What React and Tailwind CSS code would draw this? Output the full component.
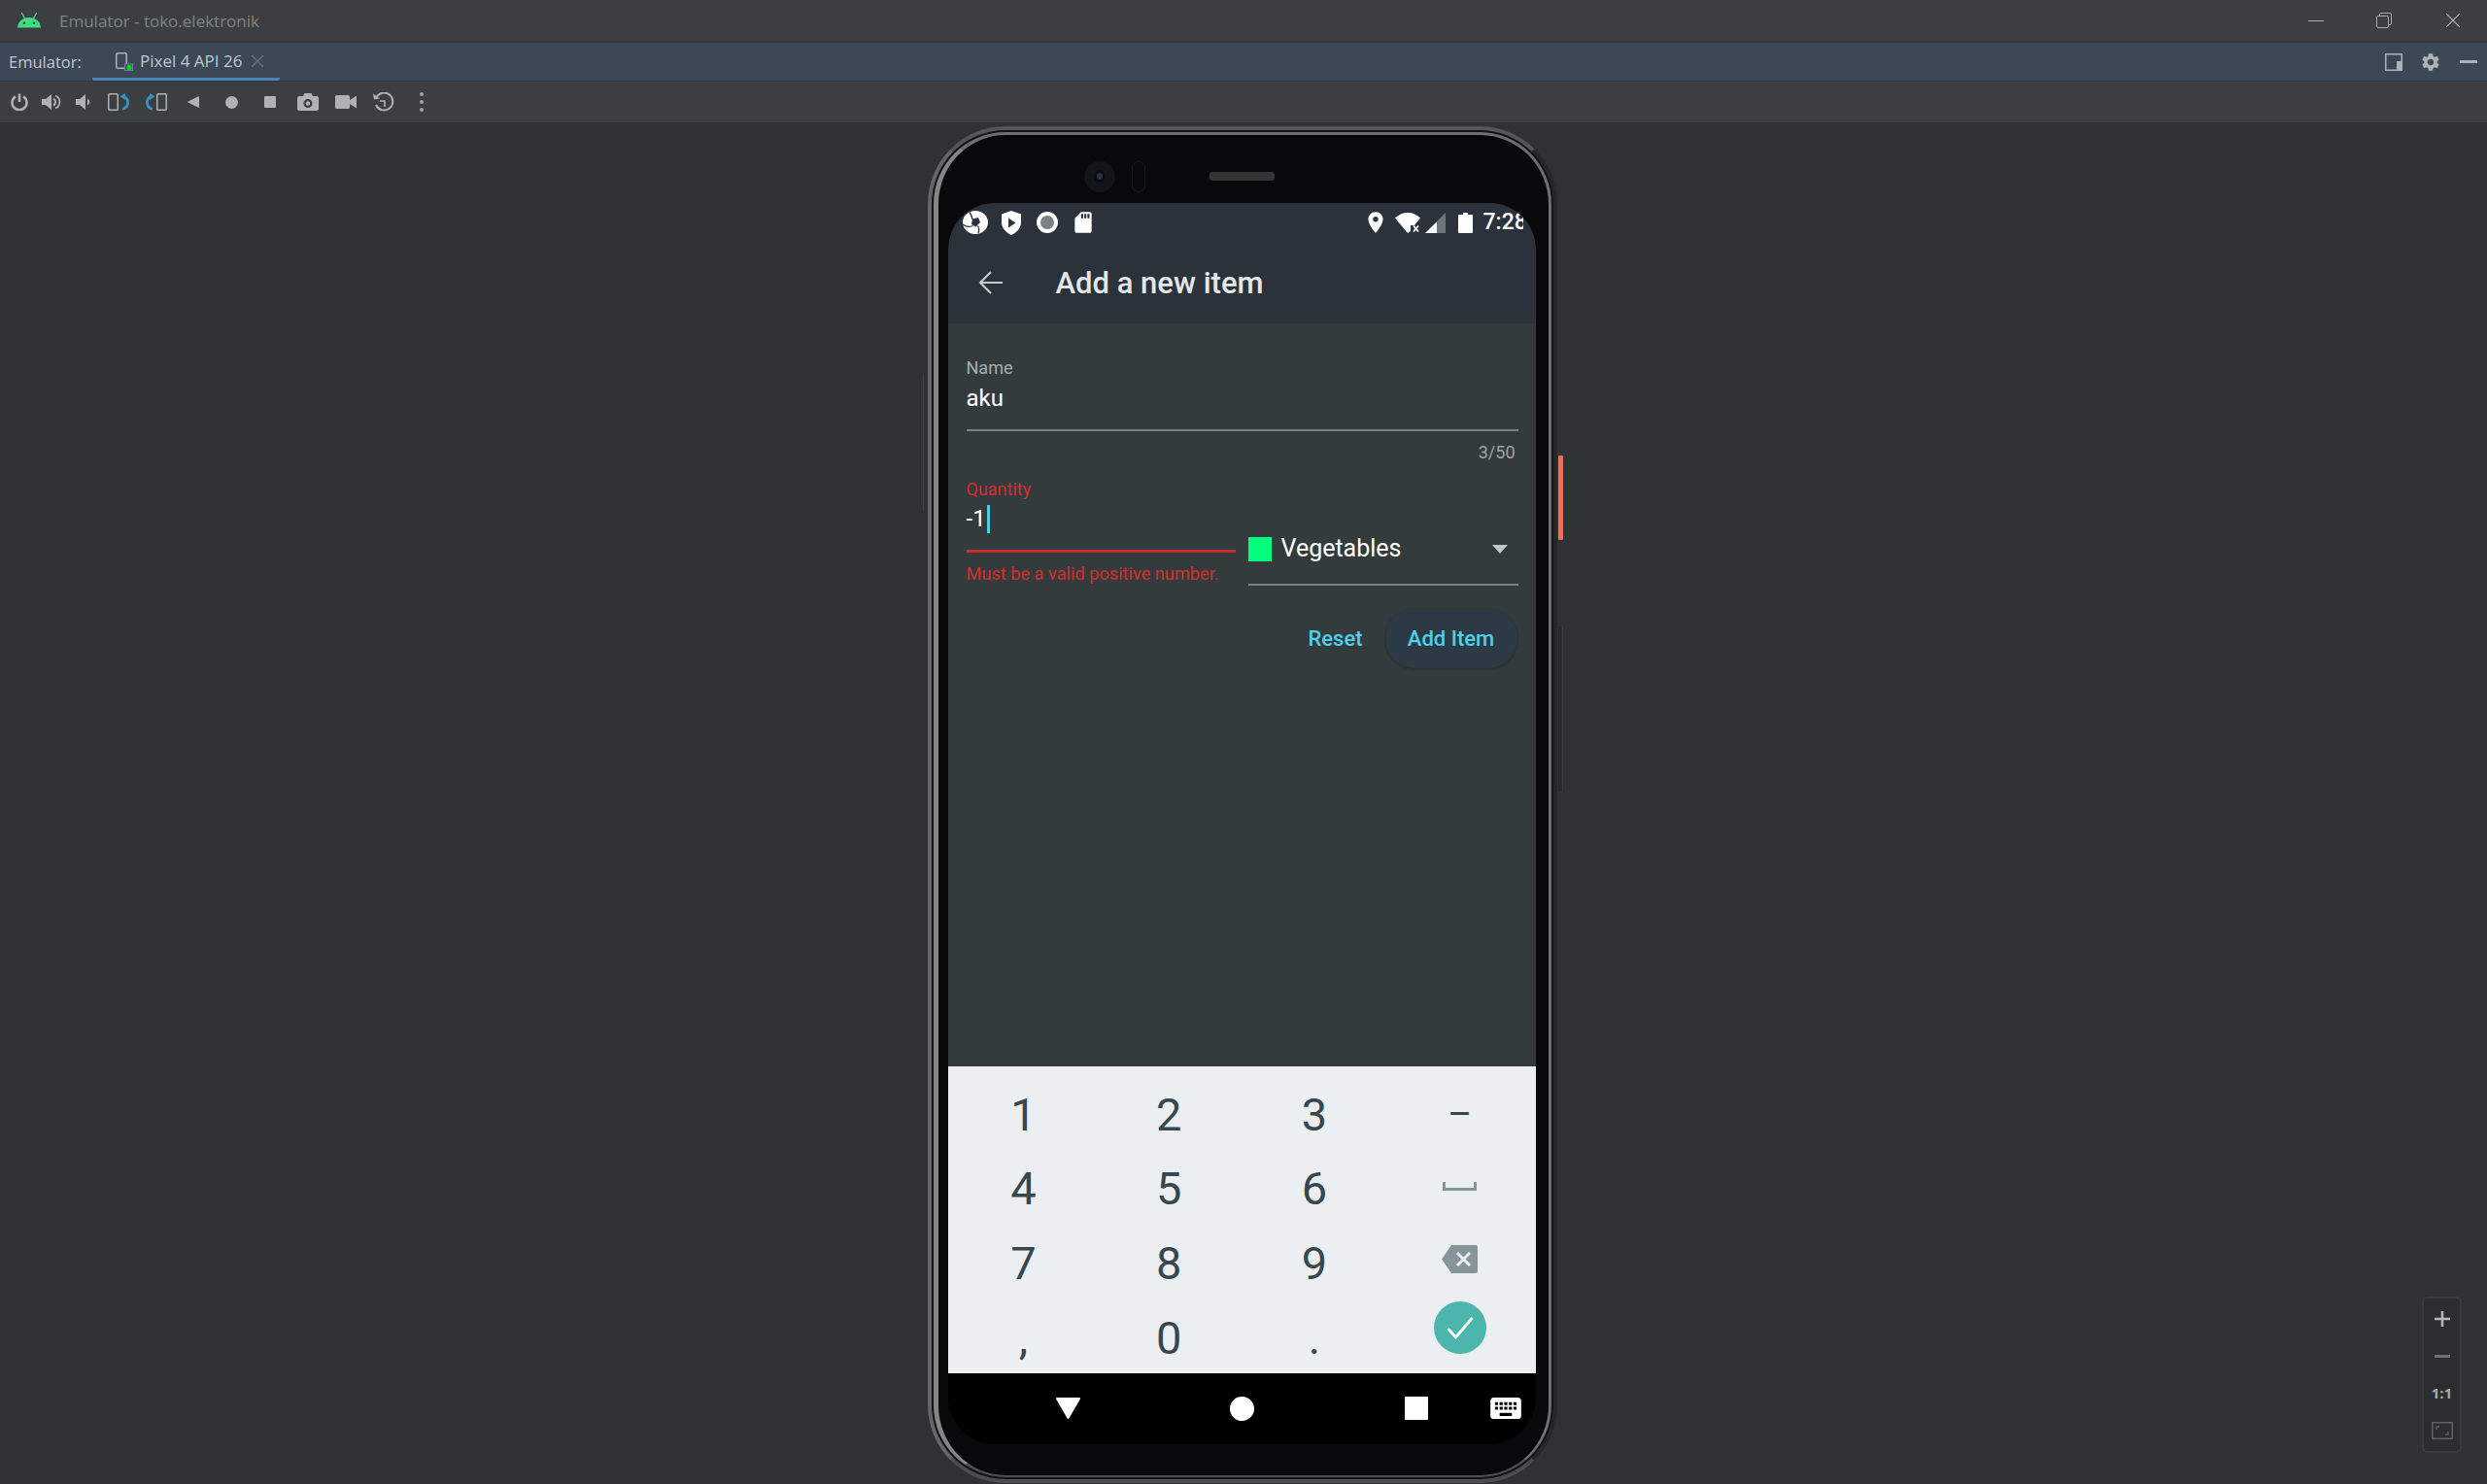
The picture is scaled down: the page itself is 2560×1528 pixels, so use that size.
import { MdSettings, MdPlace, MdSdStorage, MdKeyboard } from 'react-icons/md';

const toolbarCell = 'flex items-center justify-center h-full';

function AndroidLogo() {
    return (
        <svg width="24" height="16" viewBox="0 0 24 16">
            <path d="M0 15.5C.6 9.5 5 5 12 5s11.400 4.500 12 10.500z" fill="#3ddc84" />
            <path d="M4.500 .5L7.800 6.500M19.500 .5L16.200 6.500" stroke="#3ddc84" strokeWidth="1.300" strokeLinecap="round" />
            <circle cx="7" cy="10.800" r="1.200" fill="#3c3f41" />
            <circle cx="17" cy="10.800" r="1.200" fill="#3c3f41" />
        </svg>
    );
}

function RotateIcon() {
    return (
        <svg width="22" height="18" viewBox="0 0 22 18" fill="none">
            <rect x=".75" y=".75" width="9.500" height="16.500" rx="1" stroke="#afb1b3" strokeWidth="1.500" />
            <path d="M15 3.200c3.500 .3 5.600 3 5.600 6.300s-2.100 6-5.600 7" stroke="#3592c4" strokeWidth="2.800" />
            <path d="M12.500 3.200L18 0v7z" fill="#3592c4" />
        </svg>
    );
}

function Toolbar() {
    return (
        <div className="flex h-[42px] shrink-0 items-center bg-[#3c3f41] pl-[3px]">
            <div className={`${toolbarCell} w-[33px]`}>
                <svg width="18" height="18" viewBox="0 0 18 18" fill="none" stroke="#afb1b3" strokeWidth="2.600">
                    <path d="M5 3.400a7.500 7.500 0 1 0 8 0" />
                    <path d="M9 .5v8.500" />
                </svg>
            </div>
            <div className={`${toolbarCell} w-[33px]`}>
                <svg width="20" height="16" viewBox="0 0 20 16" fill="none">
                    <path d="M0 5h4l6-5v16l-6-5H0z" fill="#afb1b3" />
                    <path d="M12 4.500a4 4 0 0 1 0 7" stroke="#afb1b3" strokeWidth="2" />
                    <path d="M14 1.500a7 7 0 0 1 0 13" stroke="#afb1b3" strokeWidth="1.800" />
                </svg>
            </div>
            <div className={`${toolbarCell} w-[33px]`}>
                <svg width="16" height="16" viewBox="0 0 16 16">
                    <path d="M0 5h4l6-5v16l-6-5H0z" fill="#afb1b3" />
                    <path d="M12 4.500c3 1.500 3 5.500 0 7z" fill="#afb1b3" />
                </svg>
            </div>
            <div className={`${toolbarCell} w-[39px]`}>
                <RotateIcon />
            </div>
            <div className={`${toolbarCell} w-[39px]`}>
                <div className="-scale-x-100">
                    <RotateIcon />
                </div>
            </div>
            <div className={`${toolbarCell} w-[39px]`}>
                <svg width="13" height="12" viewBox="0 0 13 12">
                    <path d="M12 .8v10.400a.6 .6 0 0 1-.9 .5L.6 6.500a.6 .6 0 0 1 0-1L11.100 .3a.6 .6 0 0 1 .9 .5z" fill="#afb1b3" />
                </svg>
            </div>
            <div className={`${toolbarCell} w-[39px]`}>
                <div className="h-[13px] w-[13px] rounded-full bg-[#afb1b3]" />
            </div>
            <div className={`${toolbarCell} w-[39px]`}>
                <div className="h-[12px] w-[12px] rounded-[1px] bg-[#afb1b3]" />
            </div>
            <div className={`${toolbarCell} w-[39px]`}>
                <svg width="22" height="18" viewBox="0 0 22 18">
                    <path
                        fillRule="evenodd"
                        d="M2 3h4l1.500-3h7L16 3h4a2 2 0 0 1 2 2v11a2 2 0 0 1-2 2H2a2 2 0 0 1-2-2V5a2 2 0 0 1 2-2zm9 3a4.500 4.500 0 1 0 0 9 4.500 4.500 0 0 0 0-9zm0 2.200a2.300 2.300 0 1 1 0 4.600 2.300 2.300 0 0 1 0-4.600z"
                        fill="#afb1b3"
                    />
                </svg>
            </div>
            <div className={`${toolbarCell} w-[39px]`}>
                <svg width="22" height="14" viewBox="0 0 22 14">
                    <path d="M1.500 0h12a1.500 1.500 0 0 1 1.500 1.500V5l7-4.500v13L15 9v3.500a1.500 1.500 0 0 1-1.500 1.500h-12A1.500 1.500 0 0 1 0 12.500v-11A1.500 1.500 0 0 1 1.500 0z" fill="#afb1b3" />
                </svg>
            </div>
            <div className={`${toolbarCell} w-[39px]`}>
                <svg width="22" height="20" viewBox="0 0 22 20" fill="none">
                    <path d="M3.200 5.500A9 9 0 1 1 3 13" stroke="#afb1b3" strokeWidth="2" />
                    <path d="M0 1.500l1 6 6-1z" fill="#afb1b3" />
                    <path d="M7 9h5v6" stroke="#afb1b3" strokeWidth="1.600" />
                </svg>
            </div>
            <div className={`${toolbarCell} w-[39px]`}>
                <div className="flex flex-col gap-[4px]">
                    <div className="h-[4px] w-[4px] rounded-full bg-[#9fa1a3]" />
                    <div className="h-[4px] w-[4px] rounded-full bg-[#9fa1a3]" />
                    <div className="h-[4px] w-[4px] rounded-full bg-[#9fa1a3]" />
                </div>
            </div>
        </div>
    );
}

function StatusBar() {
    return (
        <div className="flex h-[40px] shrink-0 items-center bg-[#2b323c] pl-[15px] pr-[13px]">
            <svg width="26" height="24" viewBox="0 0 26 24">
                <ellipse cx="13" cy="12" rx="13" ry="12" fill="#fff" />
                <path d="M10 8.500l6-1.500 2 5-4.500 4.500-4.500-2.500z" fill="#2b323c" />
                <path d="M7 1.500c1.500 2 2.500 4.500 3 7.500M0 14c3 2.500 7 3 10.500 1.500M16 23c1-2.500 1-5-.5-7.500" stroke="#2b323c" strokeWidth="1.300" fill="none" />
            </svg>
            <svg className="ml-[14px]" width="20" height="25" viewBox="0 0 20 25">
                <path d="M10 0l10 3.500v8.500c0 6-4.500 10.500-10 13C4.500 22.500 0 18 0 12V3.500z" fill="#fff" />
                <path d="M7 7.500l7.500 5-7.500 5z" fill="#2b323c" />
            </svg>
            <svg className="ml-[16px]" width="22" height="22" viewBox="0 0 22 22">
                <circle cx="11" cy="11" r="11" fill="#fff" />
                <circle cx="11" cy="11" r="7" fill="#7b8086" />
            </svg>
            <MdSdStorage className="ml-[13px] h-[26px] w-[26px] text-white" />
            <MdPlace className="ml-auto h-[26px] w-[26px] text-white" />
            <svg className="ml-[7px]" width="26" height="21" viewBox="0 0 26 21">
                <path d="M0 5.500C3.500 2 8 0 13 0s9.500 2 13 5.500l-6 7.500h-4v6l-3 2z" fill="#fff" />
                <path d="M19 13.500l5 6M24 13.500l-5 6" stroke="#fff" strokeWidth="1.800" />
            </svg>
            <svg className="ml-[5px]" width="21" height="21" viewBox="0 0 21 21">
                <path d="M21 0v21H0z" fill="#6e757c" />
                <path d="M12 9.500V21H0z" fill="#fff" />
            </svg>
            <svg className="ml-[13px]" width="15" height="21" viewBox="0 0 15 21">
                <path d="M5 0h5v2h4a1 1 0 0 1 1 1v17a1 1 0 0 1-1 1H1a1 1 0 0 1-1-1V3a1 1 0 0 1 1-1h4z" fill="#fff" />
            </svg>
            <div className="ml-[11px] w-[41px] overflow-hidden whitespace-nowrap text-[23px] leading-[30px] font-medium text-white">7:28</div>
        </div>
    );
}

function AppBar() {
    return (
        <div className="flex h-[84px] shrink-0 items-center bg-[#2b323c] pl-[31px]">
            <svg width="25" height="24" viewBox="0 0 25 24" fill="none" stroke="#c7cacc" strokeWidth="2.200">
                <path d="M25 12H2M13 1L2 12l11 11" />
            </svg>
            <div className="ml-[55px] mt-[2px] text-[31px] leading-[40px] font-medium text-[#e4e6e7]">Add a new item</div>
        </div>
    );
}

function ItemForm() {
    return (
        <div className="flex-1 bg-[#343b3d] pl-[19px] pr-[18px] pt-[35px]">
            <div className="text-[18px] leading-[22px] text-[#a9adae]">Name</div>
            <div className="mt-[5px] border-b-2 border-[#7b8082] pb-[17px] text-[24px] leading-[30px] text-white">aku</div>
            <div className="mt-[11px] pr-[3px] text-right text-[18px] leading-[22px] text-[#a0a4a5]">3/50</div>

            <div className="mt-[16px] flex items-end gap-[13px]">
                {/* Quantity */}
                <div className="w-[277px] pb-[1px]">
                    <div className="text-[18px] leading-[22px] text-[#d32f2f]">Quantity</div>
                    <div className="mt-[4px] flex items-center border-b-[3px] border-[#c62f2f] pb-[17px] text-[24px] leading-[30px] text-white">
                        <span>-1</span>
                        <span className="ml-[1px] h-[29px] w-[3px] bg-[#4dd0e1]" />
                    </div>
                    <div className="mt-[11px] whitespace-nowrap text-[18.200px] leading-[22px] text-[#d32f2f]">Must be a valid positive number.</div>
                </div>

                {/* Category */}
                <div className="flex flex-1 items-center border-b-2 border-[#7b8082] pb-[21px]">
                    <div className="h-[25px] w-[24px] bg-[#00ff7f]" />
                    <div className="ml-[10px] text-[25px] leading-[30px] text-white">Vegetables</div>
                    <svg className="ml-auto mr-[11px]" width="16" height="9" viewBox="0 0 16 9">
                        <path d="M0 0h16L8 9z" fill="#c4c7c8" />
                    </svg>
                </div>
            </div>

            <div className="mt-[24px] flex items-center justify-end pr-[1px]">
                <button className="text-[22px] leading-[30px] font-medium text-[#4dd0e9]">Reset</button>
                <button className="ml-[23px] h-[61px] w-[136px] rounded-[30px] bg-[#2b3a45] text-[22px] leading-[30px] font-medium text-[#4dd0e9] shadow-[0_1px_3px_rgba(0,0,0,0.3)]">Add Item</button>
            </div>
        </div>
    );
}

function Key({ children }) {
    return <div className="flex items-center justify-center text-[47px] leading-none text-[#37474f]">{children}</div>;
}

function NumberPad() {
    return (
        <div className="grid h-[316px] shrink-0 grid-cols-4 auto-rows-[76.670px] overflow-hidden bg-[#eceff1] px-[3px] pt-[11px]">
            <Key>1</Key>
            <Key>2</Key>
            <Key>3</Key>
            <Key><span className="text-[38px]">–</span></Key>
            <Key>4</Key>
            <Key>5</Key>
            <Key>6</Key>
            <Key>
                <svg className="-mt-[4px]" width="35" height="9" viewBox="0 0 35 9" fill="none" stroke="#86959c" strokeWidth="3">
                    <path d="M1.500 0v7.500h32V0" />
                </svg>
            </Key>
            <Key>7</Key>
            <Key>8</Key>
            <Key>9</Key>
            <Key>
                <svg className="-mt-[8px]" width="37" height="29" viewBox="0 0 37 29">
                    <path d="M10 0h25a2 2 0 0 1 2 2v25a2 2 0 0 1-2 2H10L0 14.500z" fill="#86959a" />
                    <path d="M16 8l13 13M29 8L16 21" stroke="#eceff1" strokeWidth="3" />
                </svg>
            </Key>
            <Key>,</Key>
            <Key>0</Key>
            <Key>.</Key>
            <Key>
                <div className="-mt-[20px] flex h-[54px] w-[54px] items-center justify-center rounded-full bg-[#4db6ac]">
                    <svg width="28" height="24" viewBox="0 0 28 24" fill="none" stroke="#fff" strokeWidth="2.800">
                        <path d="M1.500 13l8 9L26.500 2" />
                    </svg>
                </div>
            </Key>
        </div>
    );
}

function NavBar() {
    return (
        <div className="relative flex h-[73px] shrink-0 items-center bg-black pb-[1px]">
            <svg className="ml-[111px]" width="25" height="22" viewBox="0 0 25 22">
                <path d="M1 0h23a1 1 0 0 1 .9 1.500L13.500 21.300a1.200 1.200 0 0 1-2 0L.1 1.500A1 1 0 0 1 1 0z" fill="#fff" />
            </svg>
            <div className="ml-[154px] h-[25px] w-[25px] rounded-full bg-white" />
            <div className="ml-[155px] h-[24px] w-[24px] rounded-[1px] bg-white" />
            <MdKeyboard className="ml-[61px] h-[38px] w-[38px] text-white" />
        </div>
    );
}

function Phone() {
    return (
        <div className="relative h-[1397px] w-[648px]">
            {/* side buttons */}
            <div className="absolute left-[649px] top-[339px] h-[87px] w-[5px] rounded-[1px] bg-[#e2725b]" />
            <div className="absolute left-[649px] top-[515px] h-[170px] w-[5px] border-r border-[#3c3d3e] bg-[#292a2b]" />
            <div className="absolute left-[-5px] top-[255px] h-[140px] w-[1px] bg-[#3f4142]" />

            <div className="h-full rounded-[80px] border-[4px] border-b-[#4c4d4e] border-l-[#646566] border-r-[#262728] border-t-[#555657] bg-[#131314] p-[2px]">
                <div className="flex h-full flex-col rounded-[74px] border-b-2 border-l-[5px] border-r-[3px] border-t-[3px] border-b-[#4e4e4f] border-l-[#858585] border-r-[#6f6f6f] border-t-[#6f6f70] bg-[#09090b] pb-[32px] pl-[10px] pr-[13px]">
                    {/* camera and speaker */}
                    <div className="flex h-[70px] shrink-0 items-center pl-[140px] pt-[15px]">
                        <div className="flex h-[32px] w-[32px] items-center justify-center rounded-full bg-[#141518]">
                            <div className="flex h-[13px] w-[11px] items-center justify-center rounded-full bg-[#0b0c10]">
                                <div className="h-[7px] w-[6px] rounded-full bg-[#26304e]" />
                            </div>
                        </div>
                        <div className="ml-[17px] h-[32px] w-[14px] rounded-full border border-[#19191b]" />
                        <div className="ml-[66px] h-[9px] w-[67px] rounded-[3px] bg-[#333334]" />
                    </div>

                    <div className="flex min-h-0 flex-1 flex-col overflow-hidden rounded-[48px]">
                        <StatusBar />
                        <AppBar />
                        <ItemForm />
                        <NumberPad />
                        <NavBar />
                    </div>
                </div>
            </div>
        </div>
    );
}

export default function App() {
    return (
        <div className="flex h-[1528px] w-[2560px] flex-col overflow-hidden bg-[#2f3133] font-['Roboto',sans-serif]">
            {/* title bar */}
            <div className="flex h-[44px] shrink-0 items-center border-b-2 border-[#333537] bg-[#3c3f41] pl-[18px] font-['Open_Sans',sans-serif]">
                <AndroidLogo />
                <div className="ml-[19px] pt-[1px] text-[17px] text-[#808386]">Emulator - toko.elektronik</div>
                <div className="ml-auto flex items-center pr-[28px]">
                    <div className="h-[1px] w-[16px] bg-[#a9abad]" />
                    <svg className="ml-[54px]" width="16" height="16" viewBox="0 0 16 16" fill="none" stroke="#a9abad">
                        <rect x=".5" y="3.500" width="12" height="12" rx="1.500" />
                        <path d="M3.500 3.500V2A1.500 1.500 0 0 1 5 .5h9A1.500 1.500 0 0 1 15.500 2v9a1.500 1.500 0 0 1-1.500 1.500h-1.500" />
                    </svg>
                    <svg className="ml-[56px]" width="14" height="14" viewBox="0 0 14 14" stroke="#b4b6b8" strokeWidth="1.100">
                        <path d="M0 0l14 14M14 0L0 14" />
                    </svg>
                </div>
            </div>

            {/* tab bar */}
            <div className="flex h-[40px] shrink-0 items-stretch border-b border-[#333537] bg-[#3b4856] font-['Open_Sans',sans-serif]">
                <div className="ml-[9px] flex w-[86px] items-center pt-[1px] text-[16.500px] text-[#c4c7ca]">Emulator:</div>
                <div className="flex w-[193px] items-center rounded-b-[2px] border-b-[3px] border-[#4a83c4] pl-[24px] pt-[2px]">
                    <svg width="18" height="19" viewBox="0 0 18 19">
                        <rect x=".75" y=".75" width="10.500" height="15.500" rx="1.500" fill="none" stroke="#afb1b3" strokeWidth="1.500" />
                        <rect x="9.500" y="12" width="8" height="6.500" fill="#3b4856" stroke="#8b6fc0" />
                        <circle cx="14" cy="15.500" r="2.700" fill="#00e000" />
                    </svg>
                    <span className="ml-[7px] whitespace-nowrap text-[17px] text-[#c4c7ca]">Pixel 4 API 26</span>
                    <svg className="ml-[10px] shrink-0" width="12" height="12" viewBox="0 0 12 12" stroke="#68727d" strokeWidth="1.300">
                        <path d="M0 0l12 12M12 0L0 12" />
                    </svg>
                </div>
                <div className="ml-auto flex items-center pr-[10px]">
                    <svg width="18" height="18" viewBox="0 0 18 18">
                        <rect x=".75" y=".75" width="16.500" height="16.500" fill="none" stroke="#afb1b3" strokeWidth="1.500" />
                        <rect x="12" y="8" width="6" height="10" fill="#afb1b3" />
                    </svg>
                    <MdSettings className="ml-[18px] h-[22px] w-[22px] text-[#afb1b3]" />
                    <div className="ml-[19px] h-[3px] w-[18px] bg-[#afb1b3]" />
                </div>
            </div>

            <Toolbar />

            {/* device area */}
            <div className="relative flex min-h-0 flex-1 justify-center pr-[1px] pt-[4px]">
                <div className="-ml-[2px]">
                    <Phone />
                </div>

                {/* zoom controls */}
                <div className="absolute bottom-[32px] right-[26px] flex h-[161px] w-[41px] flex-col items-center rounded-[6px] border-2 border-[#393b3d] bg-[#2c2d2f] py-[2px] font-['Open_Sans',sans-serif]">
                    <div className="flex h-[39px] items-center justify-center">
                        <svg width="16" height="16" viewBox="0 0 16 16" stroke="#b4b6b8" strokeWidth="2.600">
                            <path d="M0 8h16M8 0v16" />
                        </svg>
                    </div>
                    <div className="flex h-[39px] items-center justify-center">
                        <div className="h-[3px] w-[16px] bg-[#6e7072]" />
                    </div>
                    <div className="flex h-[39px] items-center justify-center text-[15px] font-bold text-[#a9abad]">1:1</div>
                    <div className="flex h-[39px] items-center justify-center">
                        <svg width="22" height="18" viewBox="0 0 22 18" fill="none" stroke="#5e6062" strokeWidth="1.500">
                            <rect x=".75" y=".75" width="20.500" height="16.500" />
                            <path d="M5 8V5h3M17 10v3h-3" />
                        </svg>
                    </div>
                </div>
            </div>
        </div>
    );
}
